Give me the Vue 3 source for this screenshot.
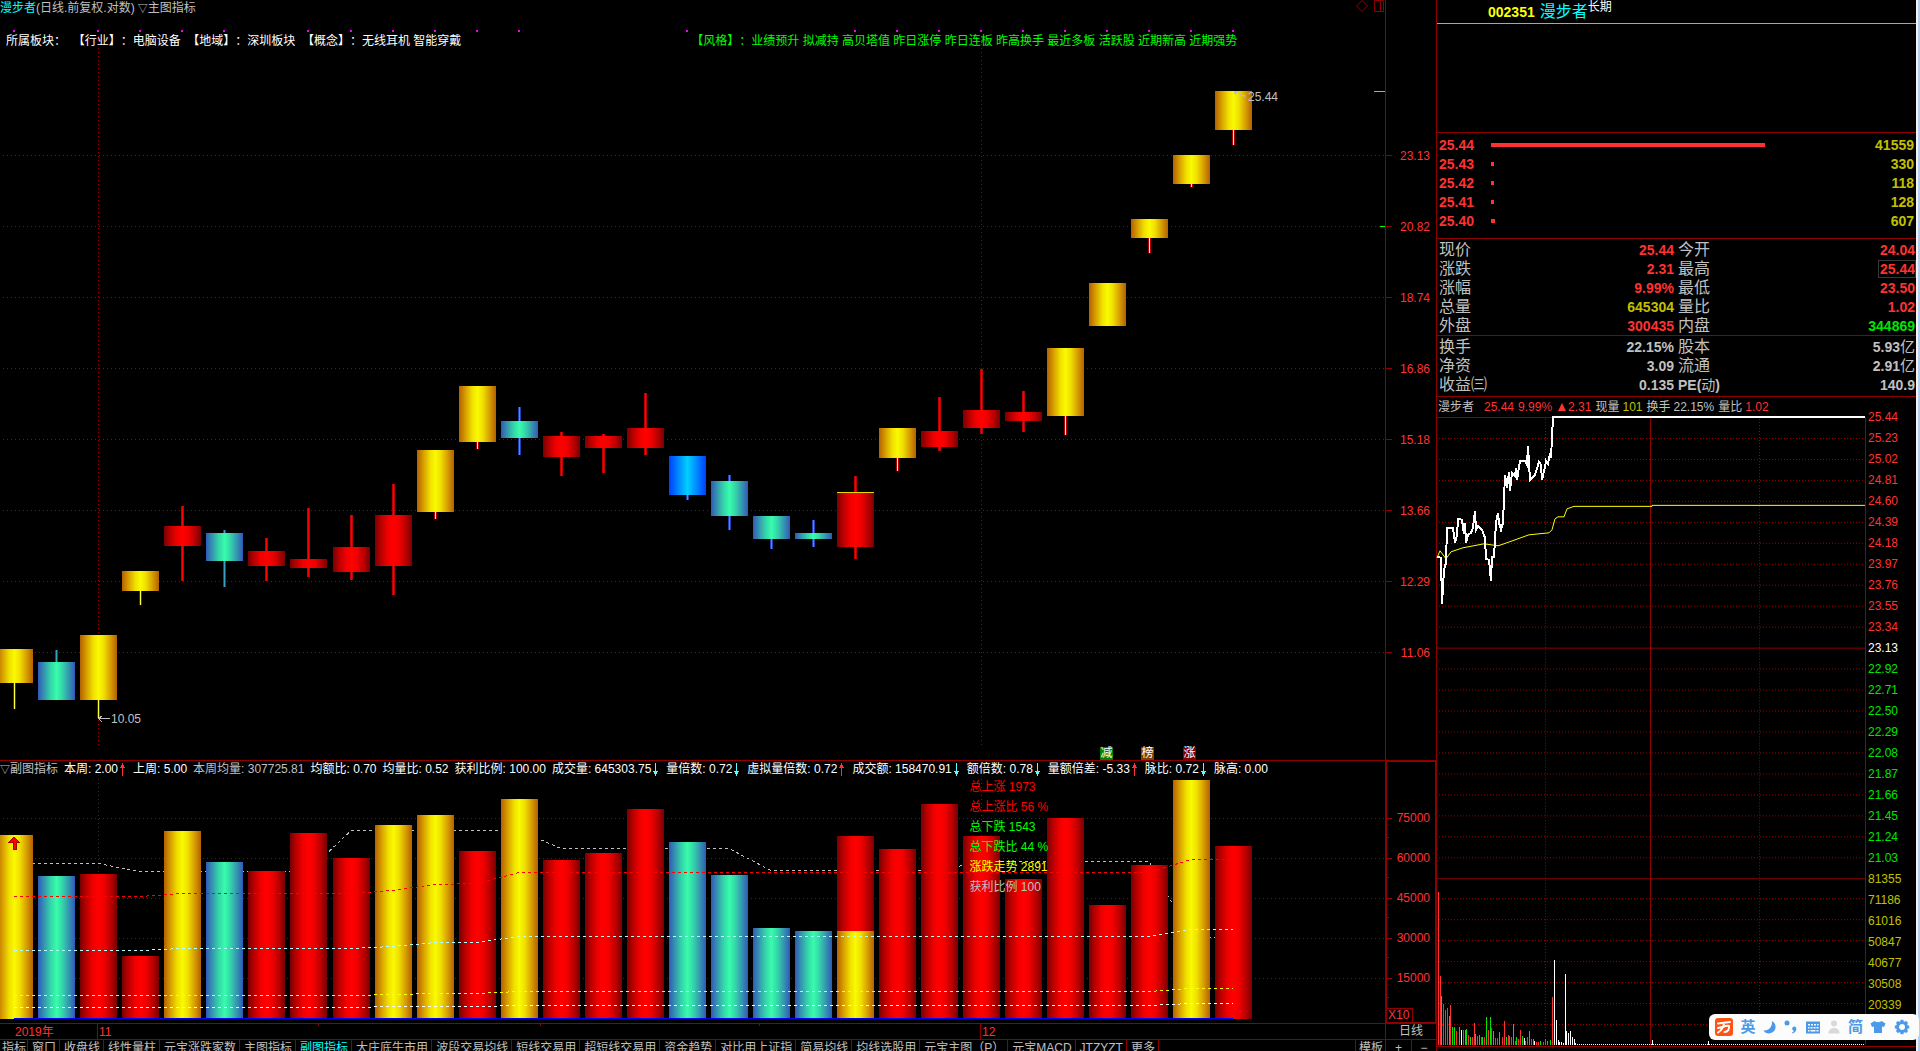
<template>
    <div class="terminal">
        <main class="charts">
            <!-- Daily candles -->
            <section class="pane kline">
                <svg class="plot" viewBox="0 0 1385 760" preserveAspectRatio="none" shape-rendering="crispEdges">
                    <defs>
                        <linearGradient v-for="(stops, name) in gradients" :id="'g-' + name" :key="name">
                            <stop v-for="(s, i) in stops" :key="i" :offset="s[0]" :stop-color="s[1]" />
                        </linearGradient>
                    </defs>
                    <g class="grid-lines">
                        <line v-for="n in 8" :key="n" x1="3" x2="1385" :y1="84.5 + n * 71" :y2="84.5 + n * 71" />
                        <line v-for="x in months" :key="x" :x1="x" :x2="x" y1="36" y2="748" />
                    </g>
                    <rect v-for="i in signals" :key="'s' + i" :x="barX(i) + 17" y="30" width="2" height="2" fill="#ff00ff" />
                    <g v-for="(c, i) in candles" :key="i">
                        <rect :x="barX(i) + 17" :y="c[3]" width="3" :height="c[4] - c[3]" :fill="wicks[c[0]][0]" />
                        <rect :x="barX(i) + 18" :y="c[3]" width="1" :height="c[4] - c[3]" :fill="wicks[c[0]][1]" />
                        <rect :x="barX(i)" :y="c[1]" width="37" :height="c[2] - c[1]" :fill="`url(#g-${c[0]})`" />
                    </g>
                    <rect :x="barX(20)" y="492" width="37" height="1" fill="#e8d800" />
                    <rect x="1374" y="91" width="11" height="1" fill="#c0c000" />
                    <rect x="1380" y="226" width="5" height="1" fill="#00ff00" />
                    <path d="M98.500 718.500h11M98.500 718.500l4 -3M98.500 718.500l4 4M1234.500 91.500l11 5M1234.500 91.500l1 4M1234.500 91.500h4"
                        stroke="#c0c0c0" fill="none" />
                </svg>

                <header class="title-row">
                    <span class="cyan">漫步者</span><span>(日线.前复权.对数)</span>
                    <span class="indicator"><i class="tri">▽</i>主图指标</span>
                    <span class="tools">
                        <svg width="28" height="12" viewBox="0 0 28 12">
                            <path d="M6 0.500L11.500 6L6 11.500L0.500 6ZM18.500 0.500h9v11h-9zM24.500 0.500v11" fill="none" stroke="#900000" />
                        </svg>
                    </span>
                </header>
                <div class="sector-row">
                    <span>{{ sectors }}</span>
                    <span class="green">{{ styles }}</span>
                </div>

                <span v-for="m in marks" :key="m.text" class="mark"
                    :style="{ left: pct(m.x, 1385), top: pct(m.y, 760) }">{{ m.text }}</span>
                <span v-for="b in badges" :key="b.text" class="badge" :class="b.kind" :style="{ left: pct(b.x, 1385) }">{{
                    b.text }}</span>
            </section>
            <aside class="axis price-axis">
                <span v-for="p in prices" :key="p" class="axis-label">{{ p }}</span>
            </aside>

            <!-- Volume -->
            <section class="pane volume">
                <svg class="plot" viewBox="0 0 1385 262" preserveAspectRatio="none" shape-rendering="crispEdges">
                    <g class="grid-lines">
                        <line v-for="n in 5" :key="n" x1="3" x2="1385" :y1="17.5 + n * 40" :y2="17.5 + n * 40" />
                        <line v-for="x in months" :key="x" :x1="x" :x2="x" y1="18" y2="261" />
                    </g>
                    <polyline class="average" :points="linePoints(averages[0].runs)" :stroke="averages[0].color" />
                    <rect v-for="(v, i) in volumes" :key="i" :x="barX(i)" :y="257 - v[1]" width="37" :height="v[1] + 1"
                        :fill="`url(#g-${v[0]})`" />
                    <rect :x="barX(20)" y="170" width="37" height="88" fill="url(#g-y)" />
                    <rect x="14" y="257" width="1219" height="1" fill="#0000ff" />
                    <polyline v-for="a in averages.slice(1)" :key="a.color" class="average" :points="linePoints(a.runs)"
                        :stroke="a.color" />
                    <path d="M14 76l5 5h-3v7h-3v-7h-4z" fill="#ff0000" stroke="#a00000" />
                </svg>
                <header class="figures">
                    <span class="dim"><i class="tri">▽</i>副图指标</span>
                    <span v-for="f in figures" :key="f[0]" :class="{ dim: f[3] }">{{ f[0] }}: {{ f[1] }}<svg v-if="f[2]"
                            class="arrow" :class="f[2]" width="5" height="13" viewBox="0 0 5 13"
                            shape-rendering="crispEdges">
                            <path d="M2 0h1v2h1v2h1v1h-2v8h-1v-8h-2v-1h1v-2h1z" />
                        </svg></span>
                </header>
                <div class="market">
                    <div v-for="m in market" :key="m[0]" :class="m[1]">{{ m[0] }}</div>
                </div>
            </section>
            <aside class="axis volume-axis">
                <span v-for="v in volumeScale" :key="v" class="axis-label">{{ v }}</span>
                <span class="unit">X10</span>
            </aside>

            <footer class="pane dates">
                <span class="date year">2019年</span>
                <span class="date month" :style="{ left: pct(97, 1385) }">11</span>
                <span class="date month" :style="{ left: pct(980, 1385) }">12</span>
                <i v-for="x in [318, 540, 759]" :key="x" class="notch" :style="{ left: pct(x, 1385) }"></i>
            </footer>
            <div class="axis period">日线</div>

            <nav class="tabs">
                <button v-for="t in tabs" :key="t" type="button" :class="{ active: t === activeTab }" @click="activeTab = t">{{
                    t }}</button>
                <button type="button" class="template">模板</button>
            </nav>
            <div class="axis zoomers">
                <button type="button">+</button>
                <button type="button">−</button>
            </div>
        </main>

        <aside class="quote">
            <h1 class="stock"><b>002351</b><span class="name">漫步者</span><sup>长期</sup></h1>
            <table class="book">
                <tbody>
                    <tr v-for="o in orders" :key="o[0]">
                        <th>{{ o[0] }}</th>
                        <td class="depth"><i :style="{ width: o[2] }"></i></td>
                        <td class="qty">{{ o[1] }}</td>
                    </tr>
                </tbody>
            </table>
            <table v-for="(rows, t) in stats" :key="t" class="stats">
                <tbody>
                    <tr v-for="r in rows" :key="r[0]">
                        <th>{{ r[0] }}</th>
                        <td :class="r[2]">{{ r[1] }}</td>
                        <th v-if="r[3] === 'PE'" class="pe"><b>PE(</b>动<b>)</b></th>
                        <th v-else>{{ r[3] }}</th>
                        <td :class="r[5]"><span :class="{ boxed: r[3] === '最高' }">{{ r[4] }}</span><small
                                v-if="r[6]">{{ r[6] }}</small></td>
                    </tr>
                </tbody>
            </table>

            <div class="ticker">
                <span class="who">漫步者</span><span class="up">25.44</span><span class="up">9.99%</span>
                <span class="up change"><svg width="8" height="8" viewBox="0 0 8 8"><path d="M4 0L8 8H0Z" fill="#ff3232" /></svg>2.31</span>
                <span>现量<em class="yellow">101</em></span><span>换手<em>22.15%</em></span><span>量比<em
                        class="up">1.02</em></span>
            </div>
            <section class="intraday">
                <svg class="minute" viewBox="0 0 429 630" preserveAspectRatio="none" shape-rendering="crispEdges">
                    <g class="grid-lines minute-grid">
                        <line v-for="y in minuteGrid" :key="y" x1="2" x2="428" :y1="y + 0.5" :y2="y + 0.5" />
                        <line x1="108.500" x2="108.500" y1="2" y2="629" />
                        <line x1="322.500" x2="322.500" y1="2" y2="629" />
                    </g>
                    <path d="M0 0.500H428.500V629M0 231.500H428M0 462.500H428M213.500 0V629" fill="none" stroke="#900000" />
                    <rect v-for="(b, i) in minuteBars" :key="i" :x="b[1]" :y="629 - b[2]" width="1" :height="b[2]"
                        :fill="minuteColors[b[0]]" />
                    <line x1="140" x2="427" y1="628.500" y2="628.500" stroke="#ffffff" stroke-dasharray="1 1" />
                    <polyline :points="averagePrice" fill="none" stroke="#ffff00" />
                    <polyline :points="lastPrice" fill="none" stroke="#ffffff" stroke-width="2" />
                </svg>
                <div class="minute-scale">
                    <span v-for="s in minuteScale" :key="s[0]" :class="s[1]">{{ s[0] }}</span>
                </div>
            </section>
        </aside>
        <div class="window-edge"></div>

        <div class="ime">
            <svg class="logo" width="18" height="18" viewBox="0 0 18 18">
                <rect width="18" height="18" rx="3" fill="#ff5215" />
                <path d="M3 5.500C7 5 11 4.500 15 4M9 5C8.500 9 6.500 12.500 3 14.500M3 10L7 9M8 9C10 8 12 7.500 14 8C14.500 11 13 14 9.500 14"
                    fill="none" stroke="#fff" stroke-width="2" stroke-linecap="round" />
            </svg>
            <button type="button">英</button>
            <svg width="14" height="14" viewBox="0 0 14 14">
                <path d="M9 1C14 4 14 11 8 13C5 14 2 13 0.500 10.500C6 11 9.500 6.500 9 1Z" fill="#4a9ae9" />
            </svg>
            <svg width="13" height="14" viewBox="0 0 13 14">
                <circle cx="3" cy="3" r="2.500" fill="#4a9ae9" />
                <path d="M10 6.500a2.300 2.300 0 0 1 2.300 2.500c0 2-1.500 4-3.800 4.500l-.4-1c1-.4 1.600-1 1.700-1.700a2.200 2.200 0 0 1 .2-4.300Z" fill="#4a9ae9" />
            </svg>
            <svg width="16" height="13" viewBox="0 0 16 13">
                <path fill-rule="evenodd" fill="#4a9ae9"
                    d="M1 0.500h14v12h-14zM3 3h2v1.500h-2zM6 3h2v1.500h-2zM9 3h2v1.500h-2zM12 3h1.500v1.500h-1.500zM3 6h1.500v1.500h-1.500zM5.500 6h2v1.500h-2zM8.500 6h2v1.500h-2zM11.500 6h2v1.500h-2zM3 9h1.500v1.500h-1.500zM5.500 9h5v1.500h-5zM11.500 9h2v1.500h-2z" />
            </svg>
            <svg width="12" height="14" viewBox="0 0 12 14">
                <circle cx="6" cy="3.500" r="3" fill="#d9d9d9" />
                <path d="M0.500 13.500C0.500 9.500 3 8 6 8S11.500 9.500 11.500 13.500Z" fill="#d9d9d9" />
            </svg>
            <button type="button">简</button>
            <svg width="16" height="14" viewBox="0 0 16 14">
                <path d="M4.500 1C6 2.500 10 2.500 11.500 1L15.500 3.500L14 7L12 6.500V13H4V6.500L2 7L0.500 3.500Z" fill="#4a9ae9" />
            </svg>
            <svg width="16" height="16" viewBox="0 0 16 16">
                <circle cx="8" cy="8" r="4.500" fill="none" stroke="#4a9ae9" stroke-width="3" />
                <g stroke="#4a9ae9" stroke-width="3">
                    <path v-for="n in 8" :key="n" d="M8 0.800V3" :transform="`rotate(${n * 45} 8 8)`" />
                </g>
            </svg>
        </div>
    </div>
</template>

<script setup>
import { ref } from 'vue';

const sectors = '所属板块：  【行业】：电脑设备  【地域】：深圳板块  【概念】：无线耳机 智能穿戴';
const styles = '【风格】：业绩预升 拟减持 高贝塔值 昨日涨停 昨日连板 昨高换手 最近多板 活跃股 近期新高 近期强势';

const gradients = {
    y: [[0, '#b46000'], [0.18, '#d8a000'], [0.36, '#f0e000'], [0.5, '#fafa00'], [0.64, '#f0e000'], [0.82, '#d8a000'], [1, '#b46000']],
    r: [[0, '#780000'], [0.15, '#b40000'], [0.35, '#f00000'], [0.5, '#ff0000'], [0.65, '#f00000'], [0.85, '#b40000'], [1, '#780000']],
    t: [[0, '#3058b8'], [0.15, '#3490b0'], [0.35, '#34d8aa'], [0.5, '#38fcaa'], [0.65, '#34d8aa'], [0.85, '#3490b0'], [1, '#3058b8']],
    b: [[0, '#0040ff'], [0.25, '#0088ff'], [0.5, '#00d0ff'], [0.75, '#0088ff'], [1, '#0040ff']]
};

const wicks = {
    y: ['#b00000', '#ffff40'],
    r: ['#c00000', '#ff0000'],
    t: ['#2040b0', '#38a0c0'],
    b: ['#2040b0', '#38a0c0']
};

// kind, body top, body bottom, high, low
const candles = [
    ['y', 649, 683, 649, 709], ['t', 662, 700, 650, 700], ['y', 635, 700, 635, 718],
    ['y', 571, 591, 571, 605], ['r', 526, 546, 506, 581], ['t', 533, 561, 530, 587],
    ['r', 551, 566, 538, 581], ['r', 559, 568, 508, 577], ['r', 547, 572, 515, 580],
    ['r', 515, 566, 484, 595], ['y', 450, 512, 450, 519], ['y', 386, 442, 386, 449],
    ['t', 421, 438, 407, 455], ['r', 436, 457, 432, 476], ['r', 436, 448, 434, 473],
    ['r', 428, 448, 393, 455], ['b', 456, 495, 456, 500], ['t', 481, 516, 475, 530],
    ['t', 516, 539, 516, 549], ['t', 533, 539, 520, 547], ['r', 492, 547, 476, 559],
    ['y', 428, 458, 428, 471], ['r', 431, 447, 397, 451], ['r', 410, 428, 369, 434],
    ['r', 412, 421, 391, 432], ['y', 348, 416, 348, 435], ['y', 283, 326, 283, 326],
    ['y', 219, 238, 219, 253], ['y', 155, 184, 155, 187], ['y', 91, 130, 91, 145]
];

const volumes = [
    ['y', 183], ['t', 142], ['r', 144], ['r', 62], ['y', 187], ['t', 156], ['r', 147], ['r', 185],
    ['r', 160], ['y', 193], ['y', 203], ['r', 167], ['y', 219], ['r', 158], ['r', 165], ['r', 209],
    ['t', 176], ['t', 143], ['t', 90], ['t', 87], ['r', 182], ['r', 169], ['r', 214], ['r', 182],
    ['r', 139], ['r', 200], ['r', 113], ['r', 153], ['y', 238], ['r', 172]
];

// runs of [number of days, y]
const averages = [
    { color: '#c0c0c0', runs: [[3, 102], [5, 110], [5, 69], [5, 87], [5, 109], [5, 100], [2, 176]] },
    { color: '#ff0000', runs: [[4, 135], [5, 132], [1, 129], [1, 123], [1, 122], [16, 111], [2, 98]] },
    { color: '#b0ffff', runs: [[4, 189], [5, 187], [1, 185], [2, 181], [16, 175], [2, 168]] },
    { color: '#ffff00', runs: [[9, 234], [1, 233], [2, 232], [16, 230], [2, 227]] },
    { color: '#ffffff', runs: [[9, 246], [3, 245], [16, 244], [2, 242]] }
];

const signals = [0, 2, 3, 4, 5, 7, 8, 9, 10, 11, 12, 16, 20, 21, 22, 23, 24, 25, 26, 27, 28, 29];
const months = [98.5, 981.5];
const prices = ['23.13', '20.82', '18.74', '16.86', '15.18', '13.66', '12.29', '11.06'];
const volumeScale = ['75000', '60000', '45000', '30000', '15000'];

const marks = [
    { text: '25.44', x: 1248, y: 97 },
    { text: '10.05', x: 111, y: 719 }
];
const badges = [
    { text: '减', x: 1100, kind: 'cut' },
    { text: '榜', x: 1141, kind: 'rank' },
    { text: '涨', x: 1183, kind: 'rise' }
];

const figures = [
    ['本周', '2.00', 'rise'], ['上周', '5.00'], ['本周均量', '307725.81', '', true], ['均额比', '0.70'],
    ['均量比', '0.52'], ['获利比例', '100.00'], ['成交量', '645303.75', 'fall'], ['量倍数', '0.72', 'fall'],
    ['虚拟量倍数', '0.72', 'rise'], ['成交额', '158470.91', 'fall'], ['额倍数', '0.78', 'fall'],
    ['量额倍差', '-5.33', 'rise'], ['脉比', '0.72', 'fall'], ['脉高', '0.00']
];

const market = [
    ['总上涨 1973', 'red'], ['总上涨比 56 %', 'red'], ['总下跌 1543', 'green'],
    ['总下跌比 44 %', 'green'], ['涨跌走势 2891', 'bright'], ['获利比例 100', 'dim']
];

const tabs = ['指标', '窗口', '收盘线', '线性量柱', '元宝涨跌家数', '主图指标', '副图指标', '大庄底牛市用',
    '波段交易均线', '短线交易用', '超短线交易用', '资金趋势', '对比用上证指', '简易均线', '均线选股用',
    '元宝主图（P）', '元宝MACD', 'JTZYZT', '更多'];
const activeTab = ref('副图指标');

const orders = [
    ['25.44', '41559', '80%'], ['25.43', '330', '3px'], ['25.42', '118', '3px'],
    ['25.41', '128', '3px'], ['25.40', '607', '4px']
];

const stats = [
    [
        ['现价', '25.44', 'up', '今开', '24.04', 'up'],
        ['涨跌', '2.31', 'up', '最高', '25.44', 'up'],
        ['涨幅', '9.99%', 'up', '最低', '23.50', 'up'],
        ['总量', '645304', 'yellow', '量比', '1.02', 'up'],
        ['外盘', '300435', 'up', '内盘', '344869', 'down']
    ],
    [
        ['换手', '22.15%', '', '股本', '5.93', '', '亿'],
        ['净资', '3.09', '', '流通', '2.91', '', '亿'],
        ['收益㈢', '0.135', '', 'PE', '140.9', '']
    ]
];

const minuteScale = [
    ...['25.44', '25.23', '25.02', '24.81', '24.60', '24.39', '24.18', '23.97', '23.76', '23.55', '23.34'].map(v => [v, 'up']),
    ['23.13', 'flat'],
    ...['22.92', '22.71', '22.50', '22.29', '22.08', '21.87', '21.66', '21.45', '21.24', '21.03'].map(v => [v, 'down']),
    ...['81355', '71186', '61016', '50847', '40677', '30508', '20339'].map(v => [v, 'yellow'])
];

const minuteGrid = [];
for (let n = 1; n < 22; n++) if (n !== 11) minuteGrid.push(n * 21);
for (let n = 0; n < 7; n++) minuteGrid.push(482 + n * 21);

const lastPrice = '0,140 4,141 5,187 7,153 9,146 10,111 16,111 18,126 20,118 21,102 25,103 27,117 28,106 29,126 31,118 34,116 36,111 38,94 39,113 41,109 45,113 48,121 49,142 52,143 54,164 55,140 57,140 59,106 61,96 62,106 64,113 66,106 68,58 70,71 72,55 73,74 75,56 78,59 79,51 80,63 83,44 88,44 90,48 91,29 93,63 98,58 102,45 104,48 105,63 108,50 109,44 111,47 113,36 114,41 116,0 428,0';
const averagePrice = '0,141 3,134 9,142 14,135 26,131 47,127 61,129 67,127 92,118 112,116 115,113 118,102 121,100 127,100 130,92 137,89.5 215,89.5 215,88.5 428,88.5';

const minuteColors = { r: '#ff3232', g: '#00e600', w: '#ffffff' };
const minuteBars = [
    ['r', 1, 153], ['r', 3, 69], ['g', 4, 49], ['r', 6, 41], ['r', 8, 35], ['r', 10, 37], ['g', 12, 29],
    ['r', 13, 40], ['g', 15, 18], ['g', 17, 18], ['r', 19, 14], ['g', 22, 18], ['w', 24, 15], ['r', 26, 15],
    ['g', 28, 15], ['g', 29, 16], ['r', 31, 10], ['g', 33, 8], ['r', 35, 8], ['r', 37, 22], ['g', 38, 11],
    ['r', 40, 9], ['g', 42, 10], ['r', 44, 8], ['g', 45, 8], ['r', 47, 8], ['g', 49, 28], ['r', 51, 15],
    ['g', 53, 28], ['r', 54, 17], ['g', 56, 14], ['r', 58, 7], ['r', 60, 7], ['g', 62, 13], ['r', 65, 8],
    ['r', 67, 24], ['g', 69, 8], ['r', 71, 10], ['r', 72, 9], ['r', 74, 8], ['g', 76, 21], ['r', 78, 4],
    ['g', 79, 8], ['r', 81, 6], ['r', 83, 15], ['g', 85, 9], ['w', 87, 7], ['g', 88, 4], ['r', 90, 8],
    ['g', 92, 14], ['r', 94, 6], ['g', 96, 6], ['w', 97, 4], ['r', 99, 3], ['r', 101, 3], ['g', 103, 4],
    ['r', 106, 3], ['r', 108, 6], ['g', 110, 4], ['g', 113, 5], ['r', 115, 48], ['w', 117, 85],
    ['w', 119, 25], ['w', 121, 5], ['w', 122, 3], ['w', 124, 3], ['w', 126, 2], ['w', 128, 71],
    ['w', 129, 14], ['w', 131, 12], ['w', 133, 14], ['w', 135, 8], ['w', 137, 6], ['w', 138, 2],
    ['w', 215, 5], ['w', 271, 4]
];

function barX(i) {
    return i * 42 - (i > 7 ? 3 : 4);
}

function linePoints(runs) {
    const ys = runs.flatMap(([n, y]) => Array(n).fill(y));
    return ys.map((y, i) => `${barX(i) + 18},${y + 0.5}`).join(' ');
}

function pct(v, total) {
    return (v / total) * 100 + '%';
}
</script>

<style>
body {
    margin: 0;
    background: #000;
}
</style>

<style scoped>
.terminal {
    position: relative;
    display: grid;
    grid-template-columns: minmax(0, 1fr) 480px 4px;
    height: 100vh;
    overflow: hidden;
    background: #000;
    color: #c0c0c0;
    font: 12px/16px "Liberation Sans", "Noto Sans CJK SC", sans-serif;
    text-spacing-trim: space-all;
}

button {
    padding: 0;
    border: none;
    background: none;
    color: inherit;
    font: inherit;
    cursor: pointer;
}

.cyan {
    color: #00ffff;
}

.green {
    color: #00ff00;
}

.red {
    color: #ff0000;
}

.bright {
    color: #ffff00;
}

.up {
    color: #ff3232;
}

.down {
    color: #00e600;
}

.yellow {
    color: #c0c000;
}

.flat {
    color: #fff;
}

.tri {
    font-size: 10px;
    font-style: normal;
}

/* Left side */
.charts {
    display: grid;
    grid-template-columns: minmax(0, 1fr) 51px;
    grid-template-rows: minmax(0, 760fr) minmax(0, 263fr) 16px 12px;
}

.pane {
    position: relative;
    min-width: 0;
    overflow: hidden;
}

.volume,
.volume-axis,
.dates,
.period,
.tabs,
.zoomers {
    border-top: 1px solid #900000;
}

.plot {
    position: absolute;
    inset: 0;
    width: 100%;
    height: 100%;
}

.grid-lines {
    stroke: #a00000;
    stroke-dasharray: 1 3;
}

.minute-grid {
    stroke-dasharray: 1 2;
}

.average {
    fill: none;
    stroke-dasharray: 3 3;
}

.title-row {
    position: relative;
    display: flex;
    height: 16px;
}

.indicator {
    margin-left: 3px;
}

.tools {
    margin: 0 1px 0 auto;
}

.sector-row {
    position: relative;
    display: flex;
    gap: 230px;
    padding: 17px 0 0 6px;
    color: #fff;
    white-space: pre;
}

.sector-row .green {
    color: #00ff00;
}

.mark {
    position: absolute;
    transform: translateY(-50%);
}

.badge {
    position: absolute;
    bottom: 0;
    width: 13px;
    height: 13px;
    color: #fff;
    line-height: 13px;
    text-align: center;
}

.badge.cut {
    background: #008000;
}

.badge.rank {
    background: #804000;
}

.badge.rise {
    background: #800000;
}

/* Scales */
.axis {
    border-left: 1px solid #900000;
    color: #ff3232;
}

.price-axis {
    display: grid;
    grid-template-rows: 120fr repeat(8, 71fr) 72fr;
}

/* empty first row above the labels */
.price-axis::before,
.volume-axis::before {
    content: "";
}

.axis-label {
    position: relative;
    display: flex;
    align-items: center;
    justify-content: space-between;
    min-height: 0;
    padding-right: 6px;
}

.axis-label::before {
    content: "";
    width: 6px;
    height: 1px;
    background: #900000;
}

.volume-axis {
    display: grid;
    grid-template-rows: 37fr repeat(5, 40fr) 25fr;
    box-shadow: inset 0 0 0 1px #900000;
}

.volume-axis .axis-label::after {
    content: "";
    position: absolute;
    left: 0;
    bottom: 0;
    width: 3px;
    height: 1px;
    background: #900000;
}

.unit {
    align-self: end;
    justify-self: start;
    padding: 0 3px 0 1px;
    border: 1px solid #900000;
    line-height: 13px;
}

/* Volume pane */
.figures {
    position: relative;
    display: flex;
    gap: 6px;
    color: #fff;
    white-space: nowrap;
}

.dim {
    color: #c0c0c0;
}

.arrow {
    margin: 0 2px;
    vertical-align: -3px;
}

.arrow.rise {
    fill: #ff3232;
}

.arrow.fall {
    fill: #54ffff;
    transform: rotate(180deg);
}

.market {
    position: absolute;
    top: 16px;
    left: 70%;
    line-height: 20px;
    white-space: nowrap;
}

/* Dates and tabs */
.dates {
    color: #ff3232;
}

.date {
    position: absolute;
    top: 0;
}

.year {
    left: 15px;
}

.month {
    padding-left: 1px;
    border-left: 1px solid #900000;
}

.notch {
    position: absolute;
    top: 0;
    width: 1px;
    height: 2px;
    background: #900000;
}

.period {
    color: #c0c0c0;
    line-height: 15px;
    text-align: center;
}

.tabs {
    display: flex;
    align-items: flex-start;
    overflow: hidden;
}

.tabs button {
    flex: none;
    padding: 0 3px 0 4px;
    border-right: 1px solid #900000;
    white-space: nowrap;
}

.tabs button:first-child {
    padding: 0 1px 0 2px;
}

.tabs .active {
    color: #00ffff;
}

.tabs .template {
    margin-left: auto;
    border-right: none;
    border-left: 1px solid #900000;
    padding: 0 2px 0 3px;
}

.zoomers {
    display: grid;
    grid-template-columns: 1fr 1fr;
    align-items: start;
    overflow: hidden;
    color: #c0c0c0;
}

.zoomers button + button {
    border-left: 1px solid #900000;
}

/* Quote panel */
.quote {
    display: flex;
    flex-direction: column;
    min-height: 0;
    border-left: 1px solid #900000;
}

.stock {
    display: flex;
    align-items: center;
    height: 23px;
    margin: 0 0 108px;
    padding-left: 51px;
    border-bottom: 1px solid #e0a030;
    color: #ffff00;
    font-size: 14px;
}

.stock .name {
    margin-left: 5px;
    color: #00ffff;
    font-size: 16px;
    font-weight: 400;
}

.stock sup {
    align-self: flex-start;
    color: #fff;
    font-size: 12px;
    font-weight: 400;
    line-height: 14px;
}

table {
    width: 100%;
    border-spacing: 0;
    table-layout: fixed;
    font-size: 14px;
    font-weight: 700;
}

tr {
    height: 19px;
}

th,
td {
    padding: 0;
    line-height: 18px;
    white-space: nowrap;
}

th {
    text-align: left;
}

td {
    text-align: right;
}

.book {
    padding: 2px 2px 8px 2px;
    border-top: 1px solid #900000;
    color: #ff3232;
}

.book th {
    width: 52px;
}

.book .qty {
    width: 81px;
    color: #c0c000;
}

.depth i {
    display: block;
    height: 4px;
    background: #ff3232;
}

.stats {
    padding: 1px 1px 0 2px;
    border-top: 1px solid #900000;
}

.stats + .stats {
    padding-bottom: 2px;
}

.stats th {
    font-size: 16px;
    font-weight: 400;
}

.stats .pe {
    font-size: 14px;
}

.stats td:nth-child(2) {
    padding-right: 3px;
}

.stats th:nth-child(3) {
    padding-left: 1px;
}

.boxed {
    padding-left: 1px;
    outline: 1px solid #383838;
}

small {
    font-size: 15px;
    font-weight: 400;
}

.ticker {
    display: flex;
    align-items: center;
    gap: 4px;
    height: 20px;
    padding-left: 1px;
    border-top: 1px solid #900000;
    white-space: nowrap;
}

.ticker .who {
    margin-right: 6px;
}

.ticker .change svg {
    margin: 0 2px;
}

em {
    margin-left: 3px;
    font-style: normal;
}

.intraday {
    display: flex;
    flex: 1;
    min-height: 0;
    margin-bottom: 4px;
    border-bottom: 1px solid #900000;
}

.minute {
    flex: 1;
    min-width: 0;
    height: 100%;
    overflow: visible;
}

.minute-scale {
    display: grid;
    grid-template-rows: repeat(30, 21fr) 10fr;
    align-items: center;
    width: 48px;
    margin-top: -10px;
    padding-left: 2px;
}

.window-edge {
    border-left: 2px solid #f4f4f4;
    background: #b8d0f0;
}

.ime {
    position: absolute;
    right: 1px;
    bottom: 11px;
    display: flex;
    align-items: center;
    justify-content: space-between;
    box-sizing: border-box;
    width: 210px;
    height: 26px;
    padding: 0 9px 0 6px;
    border-radius: 6px;
    background: #fcfcfc;
}

.ime button {
    color: #4a9ae9;
    font-size: 15px;
    font-weight: 700;
    line-height: 22px;
}
</style>
